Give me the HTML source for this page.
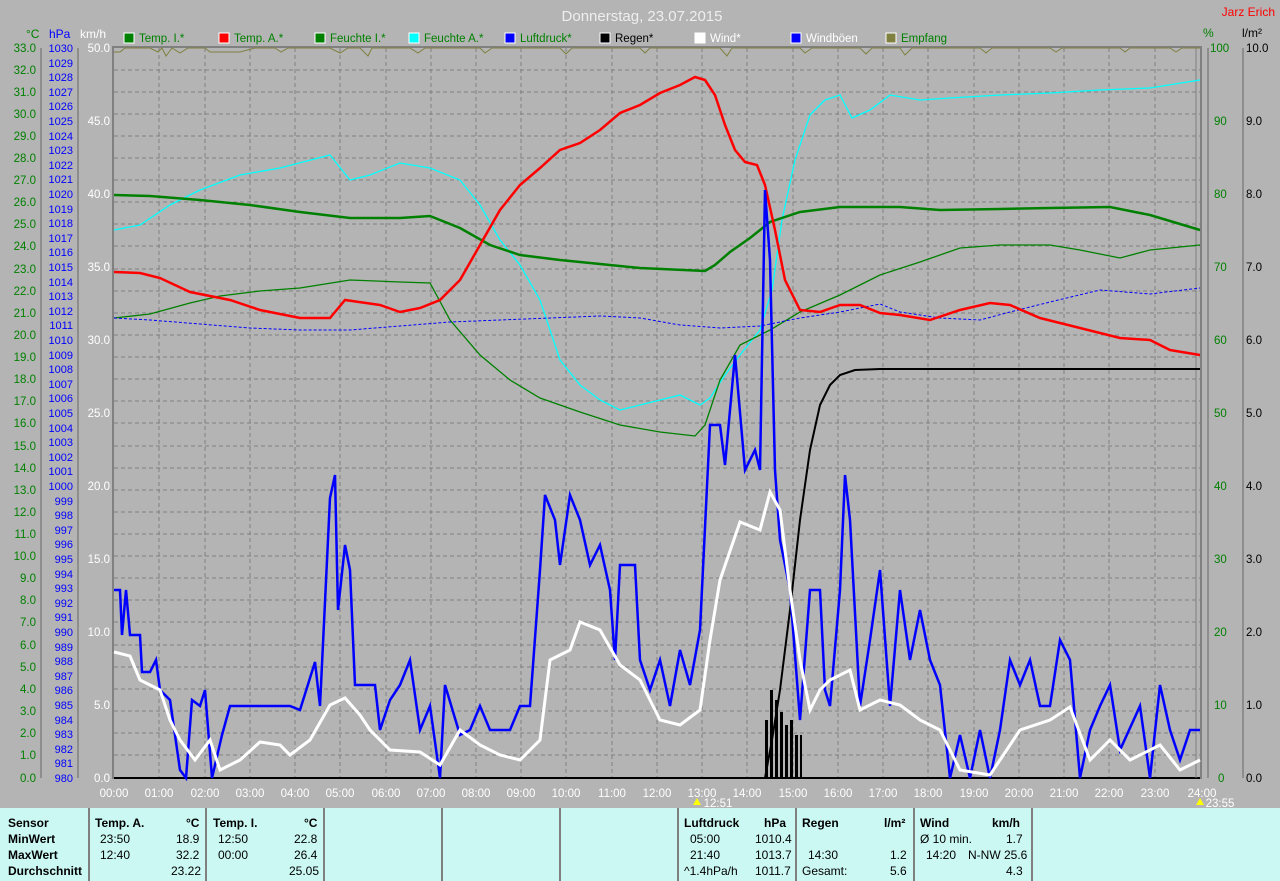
<!DOCTYPE html>
<html><head><meta charset="utf-8"><style>
body{margin:0;width:1280px;height:881px;background:#b4b4b4;font-family:"Liberation Sans",sans-serif;overflow:hidden;position:relative}
svg{position:absolute;left:0;top:0}
.tb{position:absolute;top:808px;left:0;width:1280px;height:73px;background:#ccf8f4;font-size:12px;color:#000}
.tb div{position:absolute;white-space:nowrap}
.b{font-weight:bold}
.v{position:absolute;top:0;width:2px;height:73px;background:#808080}
</style></head><body>
<svg width="1280" height="881" font-family="Liberation Sans, sans-serif" font-size="12">
<text x="642" y="21" fill="#eeeeee" font-size="15" text-anchor="middle">Donnerstag, 23.07.2015</text>
<text x="1275" y="16" fill="#ff0000" text-anchor="end">Jarz Erich</text>
<text x="26" y="38" fill="#008000">°C</text><text x="49" y="38" fill="#0000ff">hPa</text><text x="80" y="38" fill="#ffffff">km/h</text>
<text x="1203" y="37" fill="#008000">%</text><text x="1242" y="37" fill="#000">l/m²</text>
<g font-size="11.5">
<rect x="124" y="33" width="10" height="10" fill="#008000" stroke="#fff"/><text x="139" y="42" fill="#008000">Temp. I.*</text>
<rect x="219" y="33" width="10" height="10" fill="#ff0000" stroke="#fff"/><text x="234" y="42" fill="#008000">Temp. A.*</text>
<rect x="315" y="33" width="10" height="10" fill="#008000" stroke="#fff"/><text x="330" y="42" fill="#008000">Feuchte I.*</text>
<rect x="409" y="33" width="10" height="10" fill="#00ffff" stroke="#fff"/><text x="424" y="42" fill="#008000">Feuchte A.*</text>
<rect x="505" y="33" width="10" height="10" fill="#0000ff" stroke="#fff"/><text x="520" y="42" fill="#008000">Luftdruck*</text>
<rect x="600" y="33" width="10" height="10" fill="#000" stroke="#fff"/><text x="615" y="42" fill="#000">Regen*</text>
<rect x="695" y="33" width="10" height="10" fill="#fff" stroke="#fff"/><text x="710" y="42" fill="#fff">Wind*</text>
<rect x="791" y="33" width="10" height="10" fill="#0000ff" stroke="#fff"/><text x="806" y="42" fill="#fff">Windböen</text>
<rect x="886" y="33" width="10" height="10" fill="#808040" stroke="#fff"/><text x="901" y="42" fill="#008000">Empfang</text>
</g>
<g stroke="#808080" stroke-width="1.5">
<line x1="41" y1="48" x2="41" y2="778"/><line x1="78" y1="48" x2="78" y2="778"/>
<line x1="1208" y1="48" x2="1208" y2="778"/><line x1="1243" y1="48" x2="1243" y2="778"/>
</g>
<g stroke="#808080" stroke-dasharray="4,3" stroke-width="1">
<path d="M114 70H1200M114 92H1200M114 114H1200M114 136H1200M114 158H1200M114 180H1200M114 202H1200M114 224H1200M114 246H1200M114 269H1200M114 291H1200M114 313H1200M114 335H1200M114 357H1200M114 379H1200M114 401H1200M114 423H1200M114 446H1200M114 468H1200M114 490H1200M114 512H1200M114 534H1200M114 556H1200M114 578H1200M114 600H1200M114 622H1200M114 645H1200M114 667H1200M114 689H1200M114 711H1200M114 733H1200M114 755H1200"/>
<path d="M159 48V778M205 48V778M250 48V778M295 48V778M340 48V778M386 48V778M431 48V778M476 48V778M521 48V778M566 48V778M612 48V778M657 48V778M702 48V778M747 48V778M793 48V778M838 48V778M883 48V778M928 48V778M974 48V778M1019 48V778M1064 48V778M1109 48V778M1155 48V778"/>
</g>
<rect x="113" y="47" width="1088" height="731" fill="none" stroke="#808080" stroke-width="2"/>
<line x1="114" y1="778" x2="1200" y2="778" stroke="#000" stroke-width="2"/>
<line x1="1196" y1="48" x2="1196" y2="778" stroke="#808080" stroke-width="1"/>
<g fill="#008000" text-anchor="end" font-size="11.5">
<text x="36" y="52">33.0</text><text x="36" y="74">32.0</text><text x="36" y="96">31.0</text><text x="36" y="118">30.0</text><text x="36" y="140">29.0</text><text x="36" y="162">28.0</text><text x="36" y="184">27.0</text><text x="36" y="206">26.0</text><text x="36" y="228">25.0</text><text x="36" y="250">24.0</text><text x="36" y="273">23.0</text><text x="36" y="295">22.0</text><text x="36" y="317">21.0</text><text x="36" y="339">20.0</text><text x="36" y="361">19.0</text><text x="36" y="383">18.0</text><text x="36" y="405">17.0</text><text x="36" y="427">16.0</text><text x="36" y="450">15.0</text><text x="36" y="472">14.0</text><text x="36" y="494">13.0</text><text x="36" y="516">12.0</text><text x="36" y="538">11.0</text><text x="36" y="560">10.0</text><text x="36" y="582">9.0</text><text x="36" y="604">8.0</text><text x="36" y="626">7.0</text><text x="36" y="649">6.0</text><text x="36" y="671">5.0</text><text x="36" y="693">4.0</text><text x="36" y="715">3.0</text><text x="36" y="737">2.0</text><text x="36" y="759">1.0</text><text x="36" y="782">0.0</text>
</g>
<g fill="#0000ff" text-anchor="end" font-size="11">
<text x="73" y="52">1030</text><text x="73" y="67">1029</text><text x="73" y="81">1028</text><text x="73" y="96">1027</text><text x="73" y="110">1026</text><text x="73" y="125">1025</text><text x="73" y="140">1024</text><text x="73" y="154">1023</text><text x="73" y="169">1022</text><text x="73" y="183">1021</text><text x="73" y="198">1020</text><text x="73" y="213">1019</text><text x="73" y="227">1018</text><text x="73" y="242">1017</text><text x="73" y="256">1016</text><text x="73" y="271">1015</text><text x="73" y="286">1014</text><text x="73" y="300">1013</text><text x="73" y="315">1012</text><text x="73" y="329">1011</text><text x="73" y="344">1010</text><text x="73" y="359">1009</text><text x="73" y="373">1008</text><text x="73" y="388">1007</text><text x="73" y="402">1006</text><text x="73" y="417">1005</text><text x="73" y="432">1004</text><text x="73" y="446">1003</text><text x="73" y="461">1002</text><text x="73" y="475">1001</text><text x="73" y="490">1000</text><text x="73" y="505">999</text><text x="73" y="519">998</text><text x="73" y="534">997</text><text x="73" y="548">996</text><text x="73" y="563">995</text><text x="73" y="578">994</text><text x="73" y="592">993</text><text x="73" y="607">992</text><text x="73" y="621">991</text><text x="73" y="636">990</text><text x="73" y="651">989</text><text x="73" y="665">988</text><text x="73" y="680">987</text><text x="73" y="694">986</text><text x="73" y="709">985</text><text x="73" y="724">984</text><text x="73" y="738">983</text><text x="73" y="753">982</text><text x="73" y="767">981</text><text x="73" y="782">980</text>
</g>
<g fill="#ffffff" text-anchor="end" font-size="11.5">
<text x="110" y="52">50.0</text><text x="110" y="125">45.0</text><text x="110" y="198">40.0</text><text x="110" y="271">35.0</text><text x="110" y="344">30.0</text><text x="110" y="417">25.0</text><text x="110" y="490">20.0</text><text x="110" y="563">15.0</text><text x="110" y="636">10.0</text><text x="110" y="709">5.0</text><text x="110" y="782">0.0</text>
</g>
<g fill="#008000" font-size="11.5">
<text x="1210" y="52">100</text><text x="1214" y="125">90</text><text x="1214" y="198">80</text><text x="1214" y="271">70</text><text x="1214" y="344">60</text><text x="1214" y="417">50</text><text x="1214" y="490">40</text><text x="1214" y="563">30</text><text x="1214" y="636">20</text><text x="1214" y="709">10</text><text x="1218" y="782">0</text>
</g>
<g fill="#000" font-size="11.5">
<text x="1246" y="52">10.0</text><text x="1246" y="125">9.0</text><text x="1246" y="198">8.0</text><text x="1246" y="271">7.0</text><text x="1246" y="344">6.0</text><text x="1246" y="417">5.0</text><text x="1246" y="490">4.0</text><text x="1246" y="563">3.0</text><text x="1246" y="636">2.0</text><text x="1246" y="709">1.0</text><text x="1246" y="782">0.0</text>
</g>
<g fill="#ffffff" text-anchor="middle" font-size="11.5">
<text x="114" y="797">00:00</text><text x="159" y="797">01:00</text><text x="205" y="797">02:00</text><text x="250" y="797">03:00</text><text x="295" y="797">04:00</text><text x="340" y="797">05:00</text><text x="386" y="797">06:00</text><text x="431" y="797">07:00</text><text x="476" y="797">08:00</text><text x="521" y="797">09:00</text><text x="566" y="797">10:00</text><text x="612" y="797">11:00</text><text x="657" y="797">12:00</text><text x="702" y="797">13:00</text><text x="747" y="797">14:00</text><text x="793" y="797">15:00</text><text x="838" y="797">16:00</text><text x="883" y="797">17:00</text><text x="928" y="797">18:00</text><text x="974" y="797">19:00</text><text x="1019" y="797">20:00</text><text x="1064" y="797">21:00</text><text x="1109" y="797">22:00</text><text x="1155" y="797">23:00</text><text x="1202" y="797">24:00</text>
<text x="718" y="807">12:51</text><text x="1220" y="807">23:55</text>
</g>
<path d="M697 798l4 7h-8z" fill="#ffff00"/><path d="M1200 798l4 7h-8z" fill="#ffff00"/>
<polyline fill="none" stroke="#808040" stroke-width="1" points="114,52 120,52 125,48 150,48 158,52 162,48 166,56 172,48 180,53 188,48 205,48 210,52 240,52 255,48 275,48 281,52 288,48 330,48 340,53 348,48 360,48 368,56 372,48 410,48 418,53 425,48 480,48 485,53 492,48 560,48 566,54 572,48 640,48 645,53 650,48 720,48 727,56 732,48 800,48 805,53 812,48 860,48 866,54 872,48 900,48 905,55 912,48 980,48 986,53 992,48 1050,48 1056,52 1062,48 1120,48 1125,52 1130,48 1170,48 1176,52 1182,48 1200,48"/>
<g fill="#000"><rect x="765" y="720" width="3" height="58"/><rect x="770" y="690" width="3" height="88"/><rect x="775" y="700" width="3" height="78"/><rect x="780" y="712" width="3" height="66"/><rect x="785" y="725" width="3" height="53"/><rect x="790" y="720" width="3" height="58"/><rect x="795" y="735" width="3" height="43"/><rect x="800" y="735" width="2" height="43"/></g>
<polyline fill="none" stroke="#000" stroke-width="2" points="765,778 772,740 780,690 790,610 800,520 810,450 820,405 830,385 840,375 855,370 880,369 1200,369"/>
<polyline fill="none" stroke="#00ffff" stroke-width="1.3" points="114,230 140,225 170,205 200,190 240,175 280,168 330,155 350,180 370,175 400,163 430,168 460,180 480,205 500,240 520,265 540,300 560,360 580,385 600,400 620,410 640,405 660,400 680,395 700,405 710,398 725,375 740,355 760,330 772,290 782,220 795,160 810,115 825,100 840,95 852,118 870,110 890,95 920,100 950,98 1000,95 1050,93 1100,90 1150,88 1200,80"/>
<polyline fill="none" stroke="#008000" stroke-width="1.3" points="114,318 150,314 190,303 220,296 260,291 300,288 350,280 400,282 430,283 450,320 480,355 510,380 540,398 580,412 620,425 660,432 695,436 705,425 720,380 740,345 770,330 800,312 840,295 880,275 920,262 960,248 1000,245 1050,245 1080,250 1120,258 1150,250 1200,245"/>
<polyline fill="none" stroke="#0000ff" stroke-width="1" stroke-dasharray="3,2" points="114,318 150,320 200,324 250,328 300,330 350,330 400,326 450,322 500,320 550,318 600,316 640,318 680,325 720,328 760,326 800,318 840,312 880,304 900,312 940,318 980,320 1010,312 1050,302 1100,290 1150,294 1200,288"/>
<polyline fill="none" stroke="#008000" stroke-width="2.5" points="114,195 150,196 200,200 250,205 300,212 350,218 400,218 430,216 460,228 490,245 520,255 560,260 600,264 640,268 705,271 715,265 730,252 750,238 770,222 800,212 840,207 900,207 940,210 1000,209 1050,208 1110,207 1150,215 1200,230"/>
<polyline fill="none" stroke="#ff0000" stroke-width="2.5" points="114,272 140,273 160,278 190,292 230,300 260,310 300,318 330,318 345,300 380,305 400,312 420,308 440,300 460,280 480,245 500,210 520,185 540,168 560,150 580,143 600,130 620,113 640,105 660,93 680,85 695,77 705,80 715,95 725,125 735,150 745,162 757,165 765,185 775,230 785,280 800,310 820,312 840,305 860,305 880,313 900,315 930,320 960,310 990,303 1010,305 1040,318 1080,328 1120,338 1150,340 1170,350 1200,355"/>
<polyline fill="none" stroke="#0000ff" stroke-width="2.5" points="114,590 120,590 122,635 126,590 130,635 140,635 142,672 150,672 156,660 160,690 170,700 180,770 186,778 192,700 200,706 205,690 212,778 222,735 230,706 245,706 260,706 275,706 290,706 300,710 315,662 320,706 330,498 335,475 338,610 345,545 350,570 355,685 375,685 380,730 390,700 400,685 410,660 420,730 430,706 440,778 445,685 460,735 470,730 480,706 490,730 510,730 520,706 530,706 540,570 545,495 555,520 560,565 570,495 580,520 590,565 600,545 610,590 615,660 620,565 635,565 640,660 650,690 660,660 670,706 680,650 690,685 700,630 710,425 720,425 725,465 735,355 745,470 755,450 760,470 765,190 770,260 775,470 780,540 790,590 800,720 810,590 820,590 825,690 830,706 840,590 845,475 850,520 860,706 870,640 880,570 890,706 900,590 910,660 920,610 930,660 940,685 950,778 960,735 970,778 980,730 990,778 1000,730 1010,660 1020,685 1030,660 1040,706 1050,706 1060,640 1070,660 1080,778 1090,730 1100,706 1110,685 1120,750 1140,706 1150,778 1160,685 1170,730 1180,760 1190,730 1200,730"/>
<polyline fill="none" stroke="#ffffff" stroke-width="3" points="114,652 130,656 140,680 160,690 170,720 180,740 195,760 210,740 220,770 240,760 260,742 280,745 290,755 310,740 330,705 345,698 360,715 370,730 390,750 420,752 440,765 460,730 480,745 500,755 520,760 540,740 550,660 570,650 580,622 600,630 620,665 640,680 660,720 680,725 700,710 710,640 720,580 740,522 760,530 770,492 780,510 790,590 800,660 810,710 820,690 830,680 850,670 860,710 880,700 900,705 920,720 940,730 960,770 990,775 1000,760 1020,730 1050,720 1070,707 1090,760 1110,740 1130,760 1160,745 1180,770 1200,760"/>
</svg>
<div class="tb">
<div class="v" style="left:88px"></div><div class="v" style="left:205px"></div><div class="v" style="left:323px"></div><div class="v" style="left:441px"></div><div class="v" style="left:559px"></div><div class="v" style="left:677px"></div><div class="v" style="left:795px"></div><div class="v" style="left:913px"></div><div class="v" style="left:1031px"></div>
<div class="b" style="left:8px;top:8px">Sensor</div><div class="b" style="left:8px;top:24px">MinWert</div><div class="b" style="left:8px;top:40px">MaxWert</div><div class="b" style="left:8px;top:56px">Durchschnitt</div>
<div class="b" style="left:95px;top:8px">Temp. A.</div><div class="b" style="left:186px;top:8px">°C</div>
<div style="left:100px;top:24px">23:50</div><div style="left:176px;top:24px">18.9</div>
<div style="left:100px;top:40px">12:40</div><div style="left:176px;top:40px">32.2</div>
<div style="left:171px;top:56px">23.22</div>
<div class="b" style="left:213px;top:8px">Temp. I.</div><div class="b" style="left:304px;top:8px">°C</div>
<div style="left:218px;top:24px">12:50</div><div style="left:294px;top:24px">22.8</div>
<div style="left:218px;top:40px">00:00</div><div style="left:294px;top:40px">26.4</div>
<div style="left:289px;top:56px">25.05</div>
<div class="b" style="left:684px;top:8px">Luftdruck</div><div class="b" style="left:764px;top:8px">hPa</div>
<div style="left:690px;top:24px">05:00</div><div style="left:755px;top:24px">1010.4</div>
<div style="left:690px;top:40px">21:40</div><div style="left:755px;top:40px">1013.7</div>
<div style="left:684px;top:56px">^1.4hPa/h</div><div style="left:755px;top:56px">1011.7</div>
<div class="b" style="left:802px;top:8px">Regen</div><div class="b" style="left:884px;top:8px">l/m²</div>
<div style="left:808px;top:40px">14:30</div><div style="left:890px;top:40px">1.2</div>
<div style="left:802px;top:56px">Gesamt:</div><div style="left:890px;top:56px">5.6</div>
<div class="b" style="left:920px;top:8px">Wind</div><div class="b" style="left:992px;top:8px">km/h</div>
<div style="left:920px;top:24px">Ø 10 min.</div><div style="left:1006px;top:24px">1.7</div>
<div style="left:926px;top:40px">14:20</div><div style="left:968px;top:40px">N-NW 25.6</div>
<div style="left:1006px;top:56px">4.3</div>
</div>
</body></html>
